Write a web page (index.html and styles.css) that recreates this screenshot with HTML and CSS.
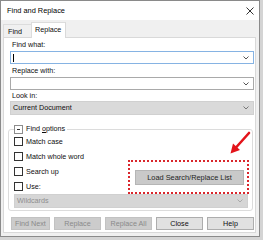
FILE: index.html
```html
<!DOCTYPE html>
<html lang="en">

<head>
    <meta charset="UTF-8">
    <title>Find and Replace</title>
    <link rel="stylesheet" href="styles.css">
</head>

<body>

    <div class="dialog">
        <div class="titlebar">
            <span class="title">Find and Replace</span>
            <svg class="close" width="8" height="8" viewBox="0 0 8 8">
                <path d="M0.5 0.5 L7.5 7.5 M7.5 0.5 L0.5 7.5" stroke="#333" stroke-width="1" fill="none" />
            </svg>
        </div>

        <div class="tabs">
            <div class="tab">Find</div>
            <div class="tab active">Replace</div>
        </div>

        <div class="panel">
            <div class="field-label">Find what:</div>
            <div class="combo focus">
                <span class="caret"></span>
                <svg class="chev" width="6" height="4" viewBox="0 0 6 4"><path d="M0.5 0.5 L3 3 L5.5 0.5" stroke="#555" fill="none" /></svg>
            </div>

            <div class="field-label second">Replace with:</div>
            <div class="combo">
                <svg class="chev" width="6" height="4" viewBox="0 0 6 4"><path d="M0.5 0.5 L3 3 L5.5 0.5" stroke="#555" fill="none" /></svg>
            </div>

            <div class="field-label third">Look in:</div>
            <div class="combo locked tall">
                <span class="combo-text">Current Document</span>
                <svg class="chev" width="6" height="4" viewBox="0 0 6 4"><path d="M0.5 0.5 L3 3 L5.5 0.5" stroke="#777" fill="none" /></svg>
            </div>

            <fieldset class="options">
                <legend><span class="minus"></span><span>Find <u>o</u>ptions</span></legend>
                <div class="options-body">
                    <div class="checks">
                        <div class="check"><span class="box"></span>Match case</div>
                        <div class="check"><span class="box"></span>Match whole word</div>
                        <div class="check"><span class="box"></span>Search up</div>
                        <div class="check"><span class="box"></span>Use:</div>
                    </div>
                    <div class="highlight">
                        <button type="button" class="load-btn">Load Search/Replace List</button>
                    </div>
                </div>
                <div class="combo locked tall dim">
                    <span class="combo-text">Wildcards</span>
                    <svg class="chev" width="6" height="4" viewBox="0 0 6 4"><path d="M0.5 0.5 L3 3 L5.5 0.5" stroke="#aaa" fill="none" /></svg>
                </div>
            </fieldset>

            <div class="buttons">
                <button type="button" class="btn off narrow">Find Next</button>
                <button type="button" class="btn off">Replace</button>
                <button type="button" class="btn off">Replace All</button>
                <button type="button" class="btn">Close</button>
                <button type="button" class="btn">Help</button>
            </div>
        </div>
    </div>

    <!-- red annotation arrow pointing at the load button -->
    <svg class="arrow" width="263" height="240" viewBox="0 0 263 240">
        <line x1="249" y1="133" x2="236" y2="147.5" stroke="#e3141b" stroke-width="2.6" stroke-linecap="round" />
        <polygon points="230.5,153.5 240,150 233,143.5" fill="#e3141b" />
    </svg>

</body>

</html>
```

FILE: styles.css
```css
body {
    margin: 0;
    background-color: #d4d4d4;
    font-family: 'Liberation Sans', Arial, sans-serif;
    font-size: 7.2px;
    color: #0e0e0e;
}

.dialog {
    width: 260px;
    height: 237px;
    box-sizing: border-box;
    border: 1px solid #8a8a8a;
    background-color: #f0f0f0;
    display: flex;
    flex-direction: column;
}

.titlebar {
    height: 19px;
    background-color: #fff;
    display: flex;
    align-items: center;
    justify-content: space-between;
    padding: 0 5px 0 6px;
}

.title {
    font-size: 7.4px;
    color: #000;
}

.close {
    margin-top: 1px;
}

.tabs {
    height: 17px;
    display: flex;
    align-items: flex-end;
    padding-left: 2px;
}

.tab {
    height: 13px;
    line-height: 13px;
    padding: 0 9px 0 4px;
    box-sizing: border-box;
    border: 1px solid #dcdcdc;
    border-bottom: none;
    border-right: none;
}

.tab.active {
    height: 16px;
    line-height: 14px;
    background-color: #fff;
    border-right: 1px solid #d9d9d9;
    padding: 0 4px 0 3px;
    margin-bottom: -1px;
    position: relative;
}

.panel {
    margin: 0 3px 0 2px;
    height: 196px;
    box-sizing: border-box;
    background-color: #fff;
    border: 1px solid #d9d9d9;
    padding: 1px 1px 0 6px;
}

.field-label {
    height: 10px;
    line-height: 10px;
    padding-left: 2px;
    margin-top: 1px;
}

.field-label.second {
    margin-top: 2px;
}

.field-label.third {
    margin-top: 1px;
}

.combo {
    height: 13px;
    box-sizing: border-box;
    border: 1px solid #a9a9a9;
    background-color: #fff;
    display: flex;
    align-items: center;
    margin-top: 1px;
    padding: 0 4px 0 2px;
}

.combo.focus {
    border-color: #86b3e3;
}

.combo.tall {
    height: 14px;
    margin-top: 0;
}

.combo.locked {
    background-color: #dadada;
    border-color: #d0d0d0;
}

.combo.dim {
    background-color: #d6d6d6;
    color: #8e8e8e;
}

.combo .chev {
    margin-left: auto;
}

.caret {
    width: 1px;
    height: 8px;
    background-color: #000;
}

.combo-text {
    line-height: 12px;
}

.options {
    margin: 9px 0 0 -2px;
    width: 245px;
    box-sizing: border-box;
    border: 1px solid #dcdcdc;
    border-radius: 3px;
    padding: 0 4px 2px 5px;
}

.options legend {
    padding: 0 2px 0 0;
    margin-left: 0;
    height: 10px;
    line-height: 10px;
    display: flex;
    align-items: center;
}

.minus {
    width: 9px;
    height: 9px;
    box-sizing: border-box;
    border: 1px solid #8d8d8d;
    margin-right: 3px;
    position: relative;
}

.minus::after {
    content: "";
    position: absolute;
    left: 2px;
    top: 3px;
    width: 3px;
    height: 1px;
    background-color: #333;
}

.options-body {
    display: flex;
    align-items: flex-end;
    justify-content: space-between;
}

.checks {
    display: flex;
    flex-direction: column;
}

.check {
    height: 15px;
    display: flex;
    align-items: center;
}

.box {
    width: 9px;
    height: 9px;
    box-sizing: border-box;
    border: 1px solid #333;
    background-color: #fff;
    margin-right: 3px;
}

.highlight {
    border: 2px dotted #d9262c;
    padding: 8px 3px 7px 5px;
    margin-right: -1px;
}

.load-btn {
    width: 109px;
    height: 15px;
    padding: 0;
    font-family: inherit;
    font-size: 7.4px;
    color: #1e1e1e;
    background-color: #c9c9c9;
    border: 1px solid #b5b5b5;
    display: block;
}

.buttons {
    display: flex;
    gap: 4px;
    margin: 6px 0 0 1px;
}

.btn {
    width: 47px;
    height: 13px;
    padding: 0;
    font-family: inherit;
    font-size: 7.2px;
    color: #0e0e0e;
    background-color: #e1e1e1;
    border: 1px solid #adadad;
}

.btn.narrow {
    width: 39px;
}

.btn.off {
    background-color: #cccccc;
    border-color: #c2c2c2;
    color: #8a8a8a;
}

.arrow {
    position: absolute;
    left: 0;
    top: 0;
    pointer-events: none;
}
```
